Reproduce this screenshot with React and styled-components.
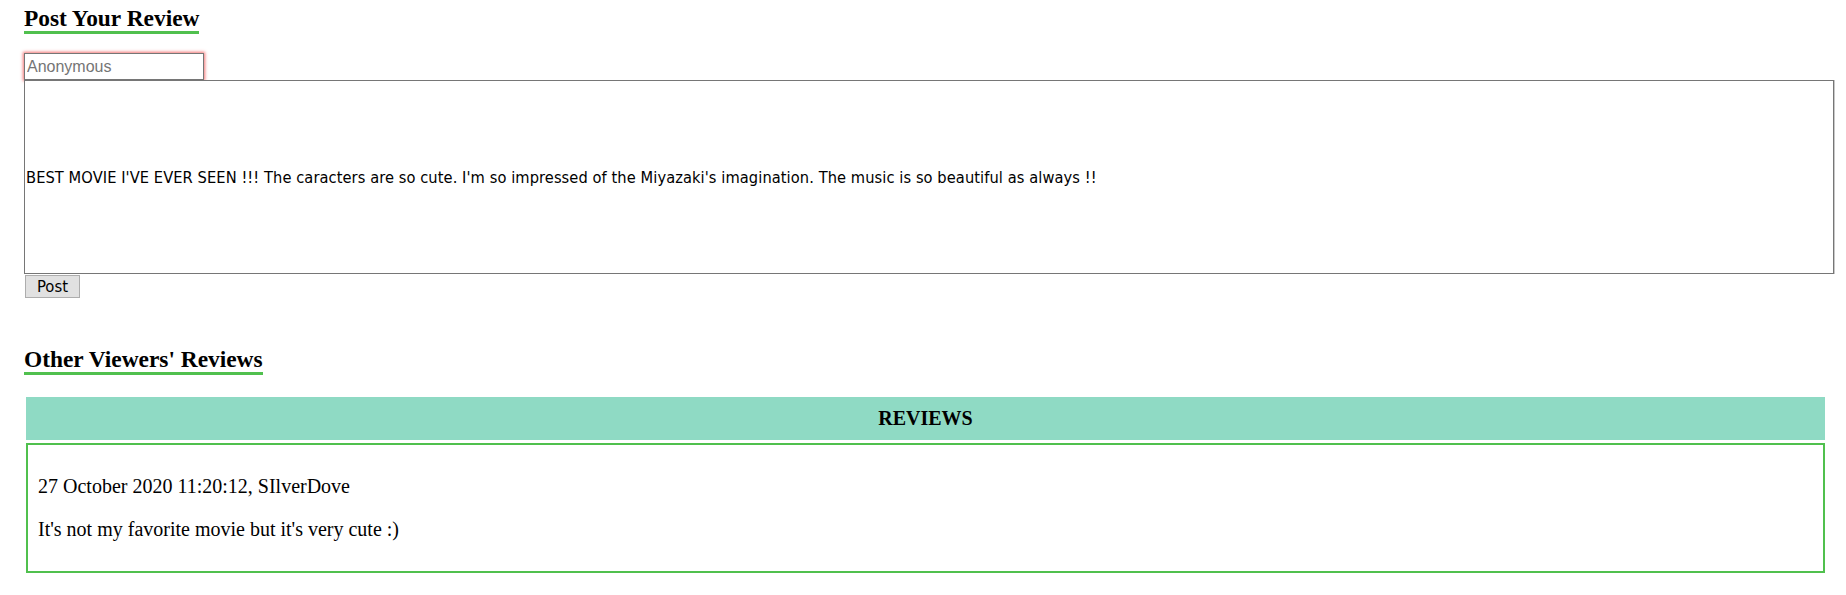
import React from "react";
import styled, { createGlobalStyle } from "styled-components";

const GlobalStyle = createGlobalStyle`
  html, body {
    margin: 0;
    padding: 0;
    background: #ffffff;
  }
  body {
    font-family: "Liberation Serif", "Times New Roman", serif;
    font-size: 20px;
    color: #000;
  }
`;

const GREEN = "#50c04e";
const TEAL = "#8fdac4";
const UI_FONT = `"DejaVu Sans", "Liberation Sans", sans-serif`;

const Page = styled.main`
  padding: 5px 0 0 24px;
  display: flex;
  flex-direction: column;
  align-items: flex-start;
`;

const SectionTitle = styled.h2`
  display: inline-block;
  margin: ${(p) => p.$top || 0}px 0 0 0;
  font-family: "Liberation Serif", "Times New Roman", serif;
  font-size: 23.4px;
  font-weight: 700;
  line-height: 26px;
  border-bottom: 3px solid ${GREEN};
`;

const Form = styled.form`
  display: flex;
  flex-direction: column;
  align-items: flex-start;
  margin-top: 19px;
`;

const NameInput = styled.input`
  box-sizing: border-box;
  width: 180px;
  height: 27px;
  margin: 0;
  padding: 1px 2px;
  border: 1px solid #767676;
  border-radius: 0;
  outline: none;
  box-shadow: 0 0 3px 1px rgba(240, 70, 70, 0.75);
  font-family: "Liberation Sans", Arial, sans-serif;
  font-size: 16px;
  color: #000;
  background: #fff;

  &::placeholder {
    color: #757575;
    opacity: 1;
  }
`;

const ReviewInput = styled.input`
  box-sizing: border-box;
  width: 1810px;
  height: 194px;
  margin: 0;
  padding: 1px 1px;
  border: 1px solid #767676;
  border-radius: 0;
  outline: none;
  box-shadow: 1px 0 0 #c8c8c8;
  font-family: ${UI_FONT};
  font-stretch: condensed;
  font-size: 16.3px;
  letter-spacing: 0.08px;
  color: #000;
  background: #fff;
`;

const PostButton = styled.button`
  box-sizing: border-box;
  width: 55px;
  height: 23px;
  margin: 1px 0 0 1px;
  padding: 0;
  border: 1px solid #adadad;
  border-radius: 0;
  background: #e1e1e1;
  font-family: ${UI_FONT};
  font-stretch: condensed;
  font-size: 16.5px;
  color: #000;
  cursor: pointer;
`;

const ReviewsTable = styled.table`
  width: 1803px;
  margin-top: 19px;
  border-collapse: separate;
  border-spacing: 2px 3px;
  font-size: 20px;
`;

const HeadCell = styled.th`
  padding: 10px;
  background: ${TEAL};
  font-weight: 700;
  line-height: 23px;
  text-align: center;
`;

const ReviewCell = styled.td`
  padding: 10px;
  border: 2px solid ${GREEN};
  text-align: left;
`;

const ReviewLine = styled.p`
  margin: 20px 0;
  line-height: 23px;
`;

const reviews = [
  {
    date: "27 October 2020 11:20:12",
    author: "SIlverDove",
    text: "It's not my favorite movie but it's very cute :)",
  },
];

export default function App() {
  return (
    <>
      <GlobalStyle />
      <Page>
        <SectionTitle>Post Your Review</SectionTitle>
        <Form onSubmit={(e) => e.preventDefault()}>
          <NameInput type="text" placeholder="Anonymous" />
          <ReviewInput
            type="text"
            defaultValue="BEST MOVIE I'VE EVER SEEN !!! The caracters are so cute. I'm so impressed of the Miyazaki's imagination. The music is so beautiful as always !!"
          />
          <PostButton type="submit">Post</PostButton>
        </Form>

        <SectionTitle $top={48}>Other Viewers' Reviews</SectionTitle>
        <ReviewsTable>
          <thead>
            <tr>
              <HeadCell>REVIEWS</HeadCell>
            </tr>
          </thead>
          <tbody>
            {reviews.map((r) => (
              <tr key={r.date}>
                <ReviewCell>
                  <ReviewLine>
                    {r.date}, {r.author}
                  </ReviewLine>
                  <ReviewLine>{r.text}</ReviewLine>
                </ReviewCell>
              </tr>
            ))}
          </tbody>
        </ReviewsTable>
      </Page>
    </>
  );
}
